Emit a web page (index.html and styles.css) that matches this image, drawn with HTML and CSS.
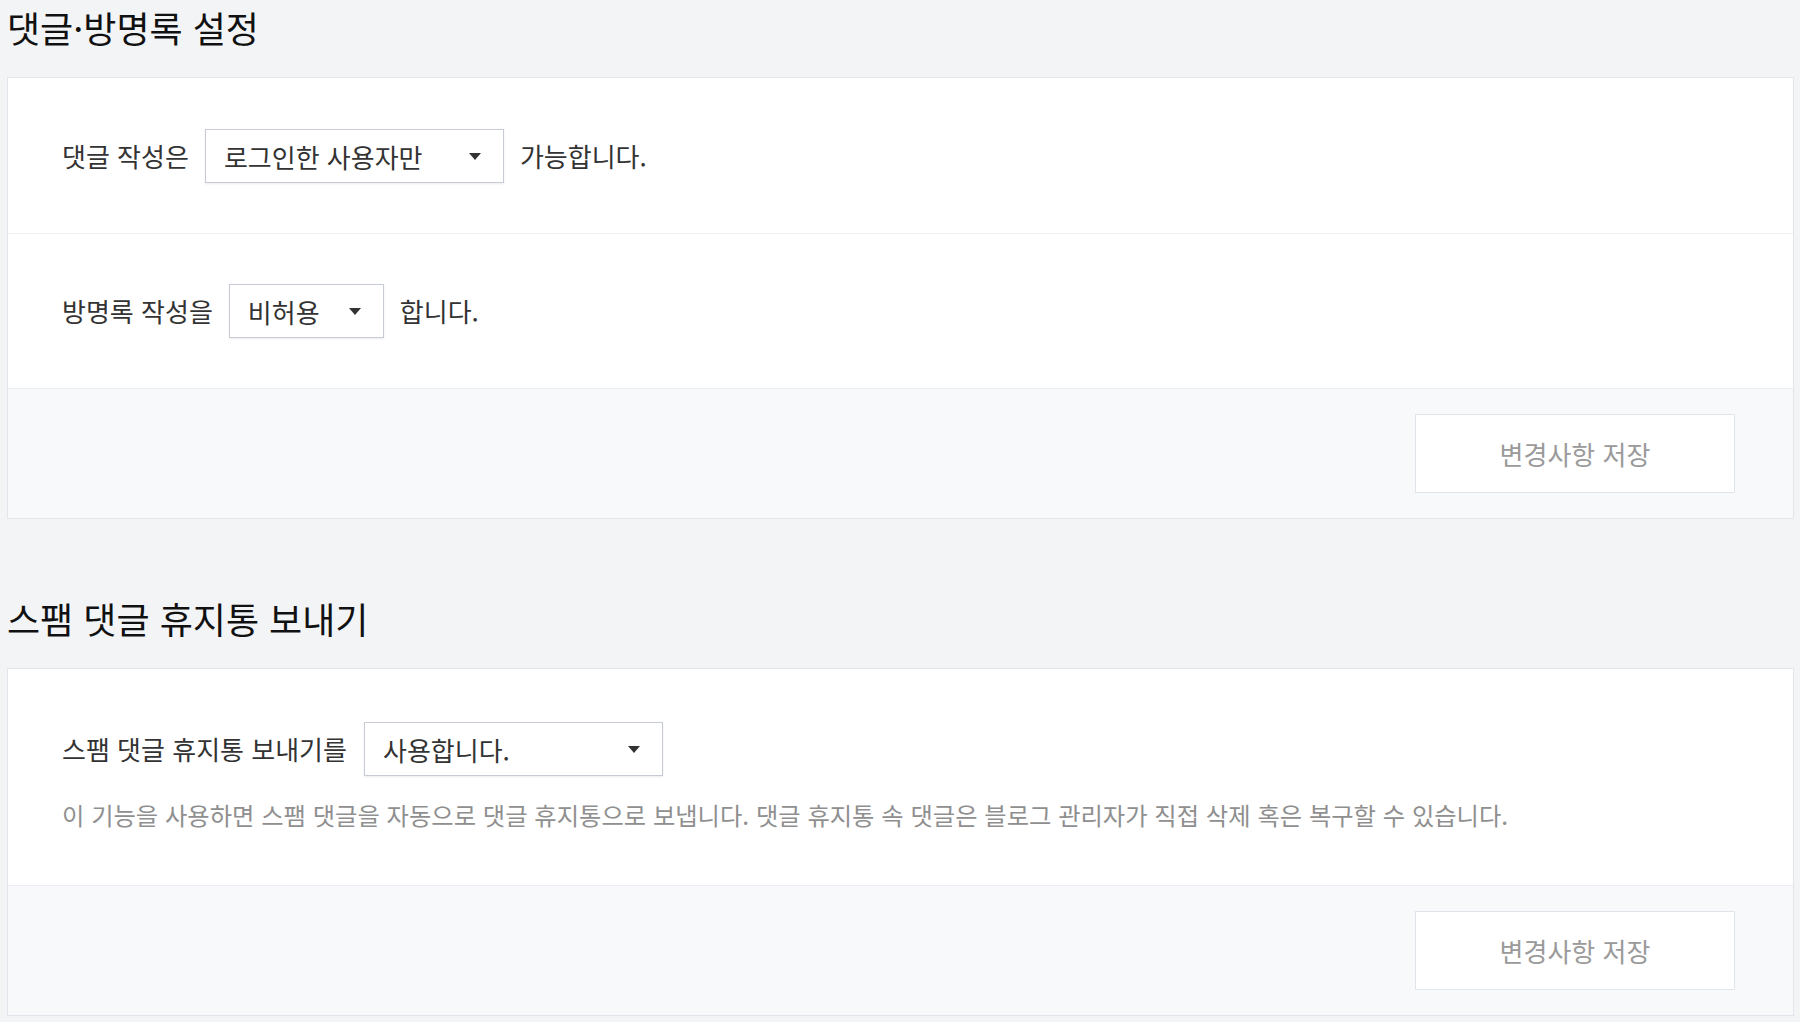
FILE: index.html
```html
<!DOCTYPE html>
<html lang="ko">
<head>
<meta charset="utf-8">
<title>댓글·방명록 설정</title>
<link rel="stylesheet" href="styles.css">
</head>
<body>
<div class="page">
  <section class="section">
    <h2 class="section-title">댓글·방명록 설정</h2>
    <div class="panel">
      <div class="row">
        <span class="label">댓글 작성은</span>
        <div class="select select-wide" role="button">
          <span class="select-value">로그인한 사용자만</span>
          <svg class="caret" width="12" height="7" viewBox="0 0 12 7"><polygon points="0,0 12,0 6,7"/></svg>
        </div>
        <span class="label">가능합니다.</span>
      </div>
      <div class="row">
        <span class="label">방명록 작성을</span>
        <div class="select select-narrow" role="button">
          <span class="select-value">비허용</span>
          <svg class="caret" width="12" height="7" viewBox="0 0 12 7"><polygon points="0,0 12,0 6,7"/></svg>
        </div>
        <span class="label">합니다.</span>
      </div>
      <div class="panel-footer">
        <button class="save-btn" type="button">변경사항 저장</button>
      </div>
    </div>
  </section>

  <section class="section section-next">
    <h2 class="section-title">스팸 댓글 휴지통 보내기</h2>
    <div class="panel">
      <div class="row row-stack">
        <div class="row-line">
          <span class="label">스팸 댓글 휴지통 보내기를</span>
          <div class="select select-wide" role="button">
            <span class="select-value">사용합니다.</span>
            <svg class="caret" width="12" height="7" viewBox="0 0 12 7"><polygon points="0,0 12,0 6,7"/></svg>
          </div>
        </div>
        <p class="desc">이 기능을 사용하면 스팸 댓글을 자동으로 댓글 휴지통으로 보냅니다. 댓글 휴지통 속 댓글은 블로그 관리자가 직접 삭제 혹은 복구할 수 있습니다.</p>
      </div>
      <div class="panel-footer">
        <button class="save-btn" type="button">변경사항 저장</button>
      </div>
    </div>
  </section>
</div>
</body>
</html>
```

FILE: styles.css
```css
* {
  box-sizing: border-box;
}

html, body {
  margin: 0;
  padding: 0;
  background: #f3f4f6;
}

body {
  font-family: "Noto Sans CJK KR", "Noto Sans", sans-serif;
  color: #333;
  font-size: 26px;
}

.page {
  padding: 0 6px 0 7px;
}

.section-title {
  margin: 0 0 23px;
  font-size: 36px;
  line-height: 54px;
  font-weight: 400;
  color: #111;
}

.section-next {
  margin-top: 72px;
}

.panel {
  background: #fff;
  border: 1px solid #e2e5eb;
}

.row {
  display: flex;
  align-items: center;
  gap: 16px;
  padding: 51px 54px 50px;
  border-bottom: 1px solid #eceef2;
}

.row + .row {
  padding-top: 50px;
}

.row-stack {
  flex-direction: column;
  align-items: flex-start;
  gap: 0;
  padding: 53px 54px 53px;
}

.row-line {
  display: flex;
  align-items: center;
  gap: 17px;
}

.label {
  line-height: 34px;
  white-space: nowrap;
}

.select {
  display: flex;
  align-items: center;
  justify-content: space-between;
  height: 54px;
  padding: 0 22px 0 18px;
  border: 1px solid #c6cbd5;
  background: #fff;
  box-shadow: 0 1px 2px rgba(0, 0, 0, 0.08);
  cursor: pointer;
}

.select-wide {
  width: 299px;
}

.select-narrow {
  width: 155px;
}

.select-value {
  color: #333;
  white-space: nowrap;
}

.caret {
  display: block;
  fill: #333;
}

.desc {
  margin: 22px 0 0;
  font-size: 24.3px;
  line-height: 34px;
  color: #8f8f8f;
}

.panel-footer {
  display: flex;
  justify-content: flex-end;
  padding: 25px 58px 25px;
  background: #f8f9fb;
}

.save-btn {
  width: 320px;
  height: 79px;
  border: 1px solid #e0e4eb;
  background: #fff;
  font-family: inherit;
  font-size: 26px;
  color: #9a9a9a;
  cursor: pointer;
}
```
